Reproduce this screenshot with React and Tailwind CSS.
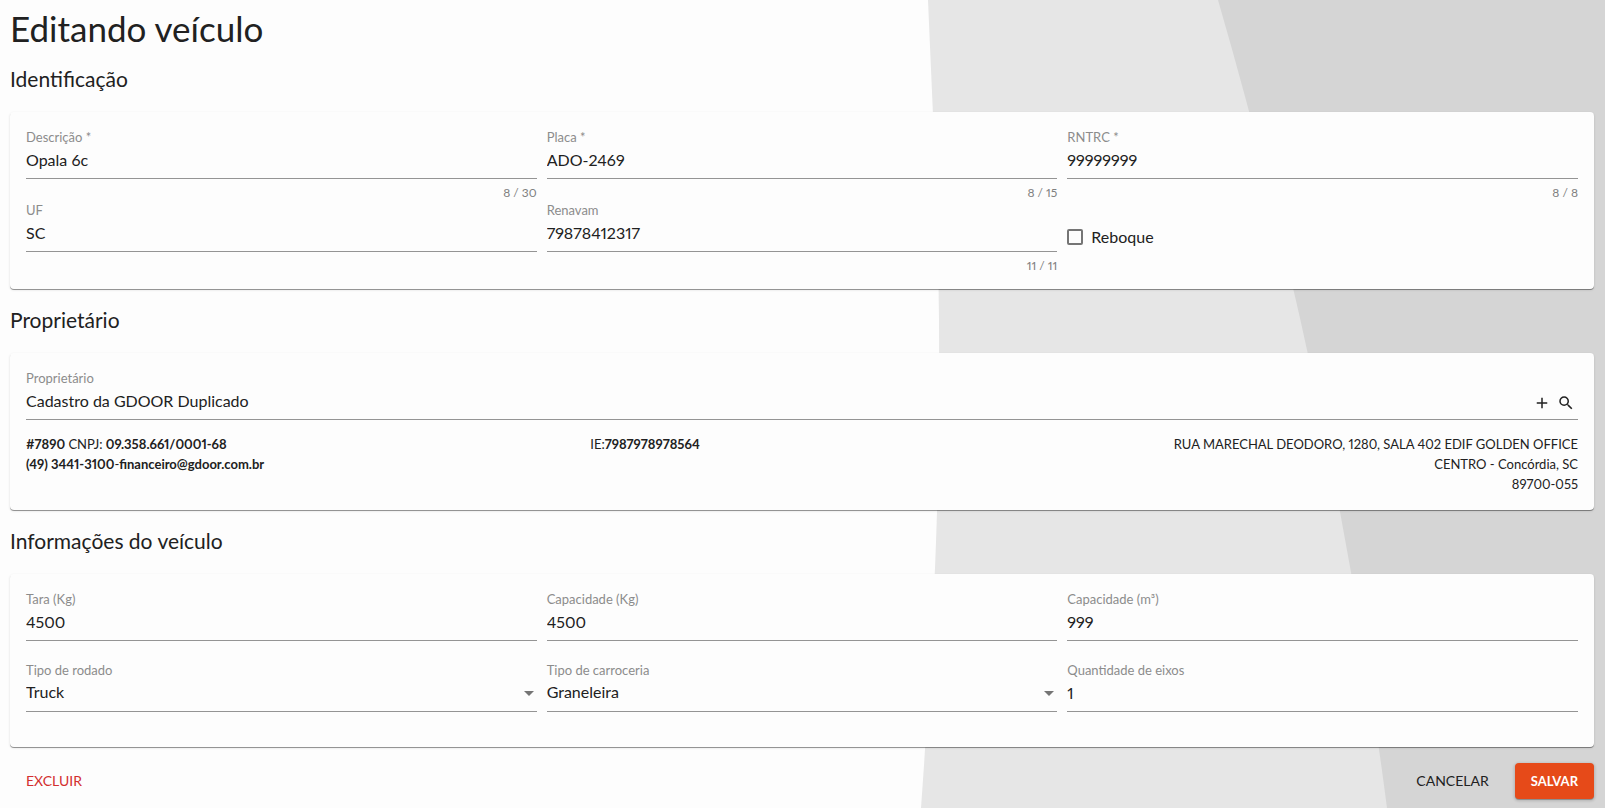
import { useState } from 'react'
import { MdAdd, MdArrowDropDown, MdSearch } from 'react-icons/md'

const lineClass =
  'block w-full h-[33px] pb-1.5 bg-transparent border-0 border-b border-[#949494] rounded-none text-base text-[#212121] outline-none'

function Field({ id, label, value, onChange, max, children }) {
  return (
    <div>
      <label htmlFor={id} className="block text-[13px] leading-[18px] text-[#8c8c8c]">
        {label}
      </label>
      {children || (
        <input id={id} type="text" className={lineClass} maxLength={max} value={value} onChange={e => onChange(e.target.value)} />
      )}
      {max && (
        <div className="pt-1.5 text-xs leading-4 text-right text-[#808080]">
          {value.length} / {max}
        </div>
      )}
    </div>
  )
}

function SelectField({ id, label, value, onChange, options }) {
  return (
    <Field id={id} label={label}>
      <div className="relative">
        <select id={id} className={`${lineClass} appearance-none`} value={value} onChange={e => onChange(e.target.value)}>
          {options.map(option => (
            <option key={option}>{option}</option>
          ))}
        </select>
        <MdArrowDropDown className="absolute -right-1 top-0.5 w-6 h-6 text-[#757575] pointer-events-none" />
      </div>
    </Field>
  )
}

function Section({ title, children }) {
  return (
    <section>
      <h2 className="pt-[15px] pb-[17px] text-[21px] leading-8 text-[#212121]">{title}</h2>
      <div className="rounded bg-[#fdfdfd] px-4 pt-4 pb-[15px] shadow-[0_1px_0_0_rgba(0,0,0,0.38),0_1px_2px_1px_rgba(0,0,0,0.06)]">
        {children}
      </div>
    </section>
  )
}

function Background() {
  return (
    <svg className="absolute inset-0 -z-10 w-full h-full" viewBox="0 0 1605 808" preserveAspectRatio="none" aria-hidden="true">
      <path fill="#e6e6e6" d="M928 0 C932 95 938 210 939 320 C940 470 936 600 921 808 L1605 808 L1605 0 Z" />
      <path fill="#d5d5d5" d="M1218 0 Q1334 400 1387 808 L1605 808 L1605 0 Z" />
    </svg>
  )
}

export default function App() {
  const [vehicle, setVehicle] = useState({
    descricao: 'Opala 6c',
    placa: 'ADO-2469',
    rntrc: '99999999',
    uf: 'SC',
    renavam: '79878412317',
    reboque: false,
    proprietario: 'Cadastro da GDOOR Duplicado',
    tara: '4500',
    capacidadeKg: '4500',
    capacidadeM3: '999',
    rodado: 'Truck',
    carroceria: 'Graneleira',
    eixos: '1',
  })

  const bind = key => ({
    id: key,
    value: vehicle[key],
    onChange: value => setVehicle(prev => ({ ...prev, [key]: value })),
  })

  return (
    <main className="relative isolate min-h-screen bg-[#fdfdfd] pl-2.5 pr-[11px] pt-2 text-[#212121] font-[Lato,sans-serif] proportional-nums">
      <Background />
      <form onSubmit={e => e.preventDefault()}>
        <h1 className="text-[35px] leading-10">Editando veículo</h1>

        <Section title="Identificação">
          <div className="grid grid-cols-3 gap-x-2.5">
            <Field {...bind('descricao')} label="Descrição *" max={30} />
            <Field {...bind('placa')} label="Placa *" max={15} />
            <Field {...bind('rntrc')} label="RNTRC *" max={8} />
            <Field {...bind('uf')} label="UF" />
            <Field {...bind('renavam')} label="Renavam" max={11} />
            <label className="flex items-center gap-2 pb-0.5 text-base">
              <input
                type="checkbox"
                className="appearance-none w-4 h-4 rounded-xs border-2 border-[#757575] checked:bg-[#e64a19] checked:border-[#e64a19]"
                checked={vehicle.reboque}
                onChange={e => setVehicle({ ...vehicle, reboque: e.target.checked })}
              />
              Reboque
            </label>
          </div>
        </Section>

        <Section title="Proprietário">
          <Field id="proprietario" label="Proprietário">
            <div className="flex items-center border-b border-[#949494]">
              <input
                id="proprietario"
                type="text"
                className="grow h-8 pb-1.5 bg-transparent text-base outline-none"
                value={vehicle.proprietario}
                onChange={e => setVehicle({ ...vehicle, proprietario: e.target.value })}
              />
              <button type="button" aria-label="Adicionar" className="flex items-center justify-center w-6 h-6">
                <MdAdd className="w-[18px] h-[18px]" />
              </button>
              <button type="button" aria-label="Pesquisar" className="flex items-center justify-center w-6 h-6">
                <MdSearch className="w-[18px] h-[18px]" />
              </button>
            </div>
          </Field>
          <div className="grid grid-cols-[4fr_3fr_4fr] pt-3.5 pb-px text-[13px] leading-5">
            <div>
              <p><b>#7890</b> CNPJ: <b>09.358.661/0001-68</b></p>
              <p><b>(49) 3441-3100</b>-<b>financeiro@gdoor.com.br</b></p>
            </div>
            <p>IE:<b>7987978978564</b></p>
            <div className="text-right">
              <p>RUA MARECHAL DEODORO, 1280, SALA 402 EDIF GOLDEN OFFICE</p>
              <p>CENTRO - Concórdia, SC</p>
              <p>89700-055</p>
            </div>
          </div>
        </Section>

        <Section title="Informações do veículo">
          <div className="grid grid-cols-3 gap-x-2.5 gap-y-5 pb-5">
            <Field {...bind('tara')} label="Tara (Kg)" />
            <Field {...bind('capacidadeKg')} label="Capacidade (Kg)" />
            <Field {...bind('capacidadeM3')} label="Capacidade (m³)" />
            <SelectField {...bind('rodado')} label="Tipo de rodado" options={['Truck', 'Toco', 'Cavalo Mecânico', 'VAN', 'Utilitário']} />
            <SelectField {...bind('carroceria')} label="Tipo de carroceria" options={['Graneleira', 'Aberta', 'Fechada/Baú', 'Sider']} />
            <Field {...bind('eixos')} label="Quantidade de eixos" />
          </div>
        </Section>

        {/* Actions */}
        <div className="flex items-center gap-2.5 pt-4 text-sm">
          <button type="button" className="h-9 px-4 mr-auto text-[#d32f2f]">EXCLUIR</button>
          <button type="button" className="h-9 px-4">CANCELAR</button>
          <button type="submit" className="h-9 px-4 rounded bg-[#e64a19] text-[13px] font-bold text-white shadow-[0_1px_1px_0_rgba(0,0,0,0.3),0_1px_2px_2px_rgba(0,0,0,0.08)]">
            SALVAR
          </button>
        </div>
      </form>
    </main>
  )
}
